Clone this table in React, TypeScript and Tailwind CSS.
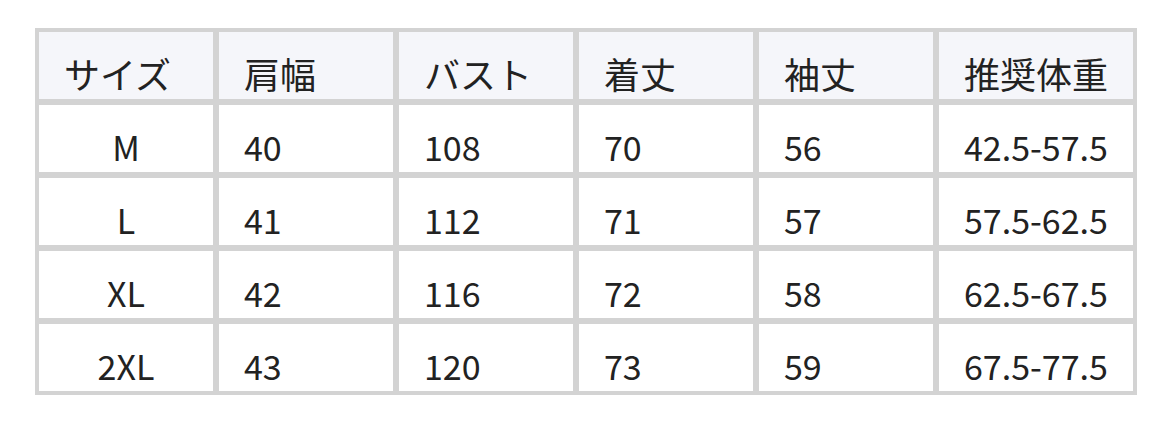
const headers = ["サイズ", "肩幅", "バスト", "着丈", "袖丈", "推奨体重"];

const rows = [
  ["M", "40", "108", "70", "56", "42.5-57.5"],
  ["L", "41", "112", "71", "57", "57.5-62.5"],
  ["XL", "42", "116", "72", "58", "62.5-67.5"],
  ["2XL", "43", "120", "73", "59", "67.5-77.5"],
];

export default function App() {
  return (
    <div
      className="w-[1172px] h-[422px] bg-white pt-[28px] pl-[35px] text-[#222222]"
      style={{ fontFamily: '"Noto Sans CJK JP", "Noto Sans", sans-serif' }}
    >
      <table className="w-[1102px] table-fixed border-separate border-spacing-0 border border-[#d3d3d3] leading-[1.448]">
        <colgroup>
          <col className="w-[180px]" />
          <col className="w-[180px]" />
          <col className="w-[180px]" />
          <col className="w-[180px]" />
          <col className="w-[180px]" />
          <col className="w-[200px]" />
        </colgroup>
        <thead>
          <tr>
            {headers.map((h) => (
              <th
                key={h}
                className="h-[73px] border-[3px] border-[#d3d3d3] bg-[#f5f6fa] pl-[25px] pt-[15px] text-left align-top text-[36px] font-normal"
              >
                {h}
              </th>
            ))}
          </tr>
        </thead>
        <tbody>
          {rows.map((r) => (
            <tr key={r[0]}>
              {r.map((c, i) => (
                <td
                  key={i}
                  className={
                    i === 0
                      ? "h-[73px] border-[3px] border-[#d3d3d3] pt-[17px] text-center align-top text-[34px]"
                      : "h-[73px] border-[3px] border-[#d3d3d3] pl-[25px] pt-[17px] text-left align-top text-[34px]"
                  }
                >
                  {c}
                </td>
              ))}
            </tr>
          ))}
        </tbody>
      </table>
    </div>
  );
}
